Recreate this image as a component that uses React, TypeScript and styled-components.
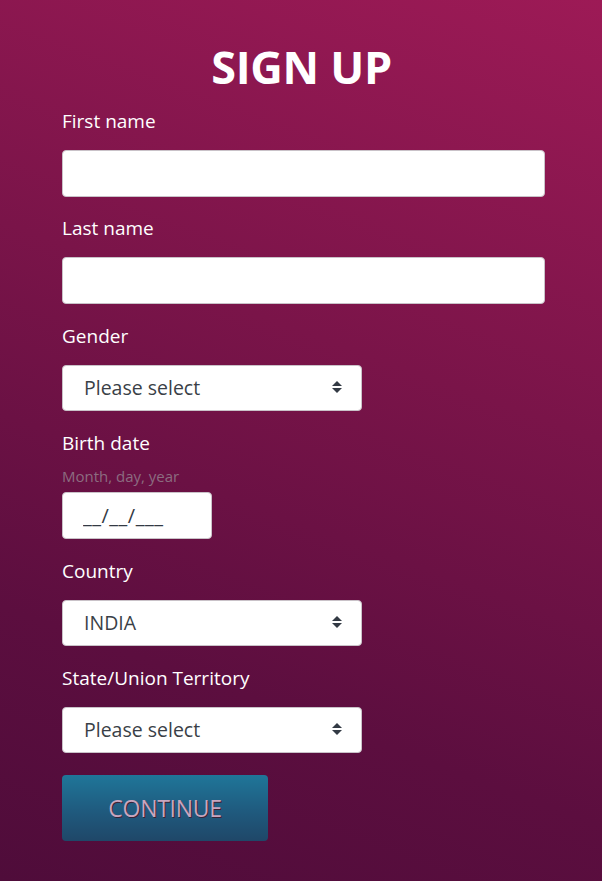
import React from "react";
import styled, { createGlobalStyle } from "styled-components";

const Global = createGlobalStyle`
  html, body { margin: 0; padding: 0; }
  body {
    min-height: 881px;
    background: linear-gradient(200deg, #9d1a56 0%, #7a1449 40%, #5c0e3f 75%, #4f0c3a 100%);
    font-family: "Open Sans", "Noto Sans", sans-serif;
  }
`;

const Page = styled.div`
  width: 602px;
  min-height: 881px;
  box-sizing: border-box;
  padding: 40px 57px 0 62px;
`;

const Title = styled.h1`
  margin: 0 0 14px -4px;
  text-align: center;
  font-size: 45px;
  line-height: 54px;
  font-weight: 700;
  color: #ffffff;
  letter-spacing: -0.3px;
`;

const Form = styled.form`
  display: flex;
  flex-direction: column;
`;

const Group = styled.div<{ $gap?: number }>`
  display: flex;
  flex-direction: column;
  margin-bottom: ${(p) => p.$gap ?? 18}px;
`;

const Label = styled.label`
  font-size: 19px;
  line-height: 27px;
  font-weight: 500;
  color: #ffffff;
  margin-bottom: 15px;
`;

const LabelTight = styled(Label)`
  margin-bottom: 8px;
`;

const Hint = styled.div`
  font-size: 15px;
  line-height: 22px;
  color: #8c6c80;
  margin-bottom: 5px;
`;

const TextInput = styled.input`
  box-sizing: border-box;
  width: 483px;
  height: 47px;
  border: 1px solid #c9c2c8;
  border-radius: 4px;
  background: #fff;
  padding: 0 20px;
  font-family: inherit;
  font-size: 18px;
  color: #333;
  outline: none;
`;

const DateInput = styled(TextInput)`
  width: 150px;
  padding: 0 20px;
  font-size: 20px;
  &::placeholder { color: #333a44; opacity: 1; letter-spacing: 0.5px; }
`;

const SelectBox = styled.div`
  box-sizing: border-box;
  width: 300px;
  height: 46px;
  border: 1px solid #c9c2c8;
  border-radius: 4px;
  background: #fff;
  display: flex;
  align-items: center;
  justify-content: space-between;
  padding: 0 19px 2px 21px;
  font-size: 19.5px;
  color: #3a3f47;
`;

const Button = styled.button`
  box-sizing: border-box;
  width: 206px;
  height: 66px;
  margin-top: 4px;
  border: none;
  border-radius: 4px;
  background: linear-gradient(180deg, #1f7699 0%, #1f5a7e 55%, #1f4768 100%);
  color: #c8a6bf;
  font-family: inherit;
  font-size: 23px;
  font-weight: 500;
  text-shadow: 1px 1px 0 #3a2236;
  letter-spacing: -0.3px;
  cursor: pointer;
`;

const Arrows = () => (
  <svg width="10" height="12" viewBox="0 0 10 12">
    <path d="M5 0 L10 5 L0 5 Z" fill="#333a44" />
    <path d="M0 7 L10 7 L5 12 Z" fill="#333a44" />
  </svg>
);

const Select = ({ value }: { value: string }) => (
  <SelectBox>
    <span>{value}</span>
    <Arrows />
  </SelectBox>
);

export default function App() {
  return (
    <>
      <Global />
      <Page>
        <Title>SIGN UP</Title>
        <Form onSubmit={(e) => e.preventDefault()}>
          <Group>
            <Label>First name</Label>
            <TextInput type="text" />
          </Group>
          <Group $gap={19}>
            <Label>Last name</Label>
            <TextInput type="text" />
          </Group>
          <Group $gap={19}>
            <Label>Gender</Label>
            <Select value="Please select" />
          </Group>
          <Group $gap={19}>
            <LabelTight>Birth date</LabelTight>
            <Hint>Month, day, year</Hint>
            <DateInput type="text" placeholder="__/__/___" />
          </Group>
          <Group $gap={19}>
            <Label>Country</Label>
            <Select value="INDIA" />
          </Group>
          <Group $gap={18}>
            <Label>State/Union Territory</Label>
            <Select value="Please select" />
          </Group>
          <Button type="submit">CONTINUE</Button>
        </Form>
      </Page>
    </>
  );
}
